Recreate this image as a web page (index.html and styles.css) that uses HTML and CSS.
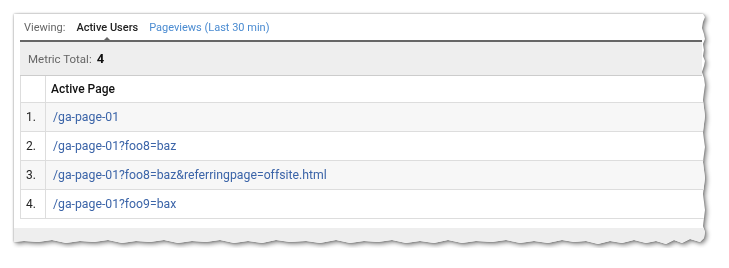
FILE: index.html
```html
<!DOCTYPE html>
<html lang="en">

<head>
    <meta charset="UTF-8">
    <title>Real-Time Content</title>
    <link rel="stylesheet" href="styles.css">
</head>

<body>

    <div class="shadow">
        <div class="card">
            <div class="viewing">
                <span class="label">Viewing:</span>
                <span class="tab ativo">Active Users</span>
                <span class="tab">Pageviews (Last 30 min)</span>
            </div>
            <div class="metric">
                Metric Total: <strong>4</strong>
            </div>
            <table>
                <thead>
                    <tr>
                        <th class="num"></th>
                        <th>Active Page</th>
                    </tr>
                </thead>
                <tbody>
                    <tr class="par">
                        <td class="num">1.</td>
                        <td><a href="#">/ga-page-01</a></td>
                    </tr>
                    <tr>
                        <td class="num">2.</td>
                        <td><a href="#">/ga-page-01?foo8=baz</a></td>
                    </tr>
                    <tr class="par">
                        <td class="num">3.</td>
                        <td><a href="#">/ga-page-01?foo8=baz&amp;referringpage=offsite.html</a></td>
                    </tr>
                    <tr>
                        <td class="num">4.</td>
                        <td><a href="#">/ga-page-01?foo9=bax</a></td>
                    </tr>
                </tbody>
            </table>
            <div class="rodape"></div>
        </div>
    </div>

</body>

</html>
```

FILE: styles.css
```css
body {
    margin: 0;
    background: #fff;
    font-family: Roboto, 'Liberation Sans', sans-serif;
}

.shadow {
    padding: 14px 0 0 14px;
    filter: drop-shadow(0 0 1px rgba(0, 0, 0, 0.35)) drop-shadow(2px 2px 2px rgba(0, 0, 0, 0.45));
}

.card {
    width: 694px;
    height: 234px;
    background: #fff;
    display: flex;
    flex-direction: column;
    clip-path: polygon(0 0, 689px 0, 691px 3px, 689px 8px, 688px 14px, 690px 20px, 691px 25px, 689px 30px, 690px 36px, 689px 42px, 691px 47px, 690px 52px, 688px 58px, 690px 64px, 691px 71px, 690px 78px, 689px 86px, 690px 94px, 691px 102px, 690px 110px, 689px 118px, 690px 126px, 691px 133px, 690px 140px, 689px 148px, 690px 156px, 691px 164px, 690px 172px, 689px 180px, 690px 188px, 691px 196px, 690px 204px, 689px 212px, 691px 218px, 690px 224px, 686px 228px, 676px 225px, 668px 229px, 660px 226px, 652px 230px, 642px 227px, 632px 229px, 620px 226px, 608px 229px, 596px 227px, 584px 230px, 572px 227px, 560px 228px, 548px 226px, 534px 229px, 520px 227px, 506px 229px, 492px 226px, 478px 228px, 462px 227px, 448px 229px, 434px 226px, 420px 229px, 406px 227px, 392px 229px, 378px 226px, 364px 228px, 350px 227px, 336px 229px, 322px 226px, 306px 229px, 292px 227px, 276px 228px, 262px 226px, 248px 229px, 234px 227px, 220px 229px, 206px 226px, 192px 228px, 178px 227px, 164px 229px, 150px 226px, 136px 228px, 122px 227px, 108px 229px, 94px 226px, 80px 228px, 66px 227px, 52px 229px, 38px 226px, 24px 228px, 10px 227px, 0 228px);
}

.viewing {
    height: 26px;
    margin: 0 6px;
    padding-left: 4px;
    display: flex;
    align-items: center;
    gap: 10px;
    font-size: 11px;
}

.label {
    color: #666;
}

.tab {
    position: relative;
    color: #4a8bd1;
    margin-left: 1px;
}

.tab.ativo {
    color: #222;
    font-weight: 500;
}

.tab.ativo::after {
    content: "";
    position: absolute;
    left: 50%;
    bottom: -8px;
    margin-left: -5px;
    border-left: 5px solid transparent;
    border-right: 5px solid transparent;
    border-bottom: 5px solid #666;
}

.metric {
    margin: 0 6px;
    height: 33px;
    padding-left: 8px;
    border-top: 2px solid #666;
    border-bottom: 1px solid #ccc;
    background: #eee;
    display: flex;
    align-items: center;
    font-size: 11.5px;
    color: #666;
}

.metric strong {
    margin-left: 5px;
    color: #111;
    font-size: 13px;
    font-weight: 700;
}

table {
    margin: 0 6px;
    width: 700px;
    border-collapse: collapse;
    table-layout: fixed;
    font-size: 12px;
}

th,
td {
    border: 1px solid #ddd;
    text-align: left;
    padding: 0 7px;
    height: 28px;
}

thead th {
    border-top: none;
    height: 26px;
    padding-left: 5px;
    color: #111;
    font-weight: 500;
}

td.num,
th.num {
    width: 10px;
    text-align: right;
    padding: 0 9px 0 5px;
    color: #222;
}

.par {
    background-color: #f7f7f7;
}

td a {
    color: #3b64a8;
    font-size: 12.25px;
    text-decoration: none;
}

.rodape {
    margin-top: 9px;
    flex: 1;
    background: #eee;
}
```
